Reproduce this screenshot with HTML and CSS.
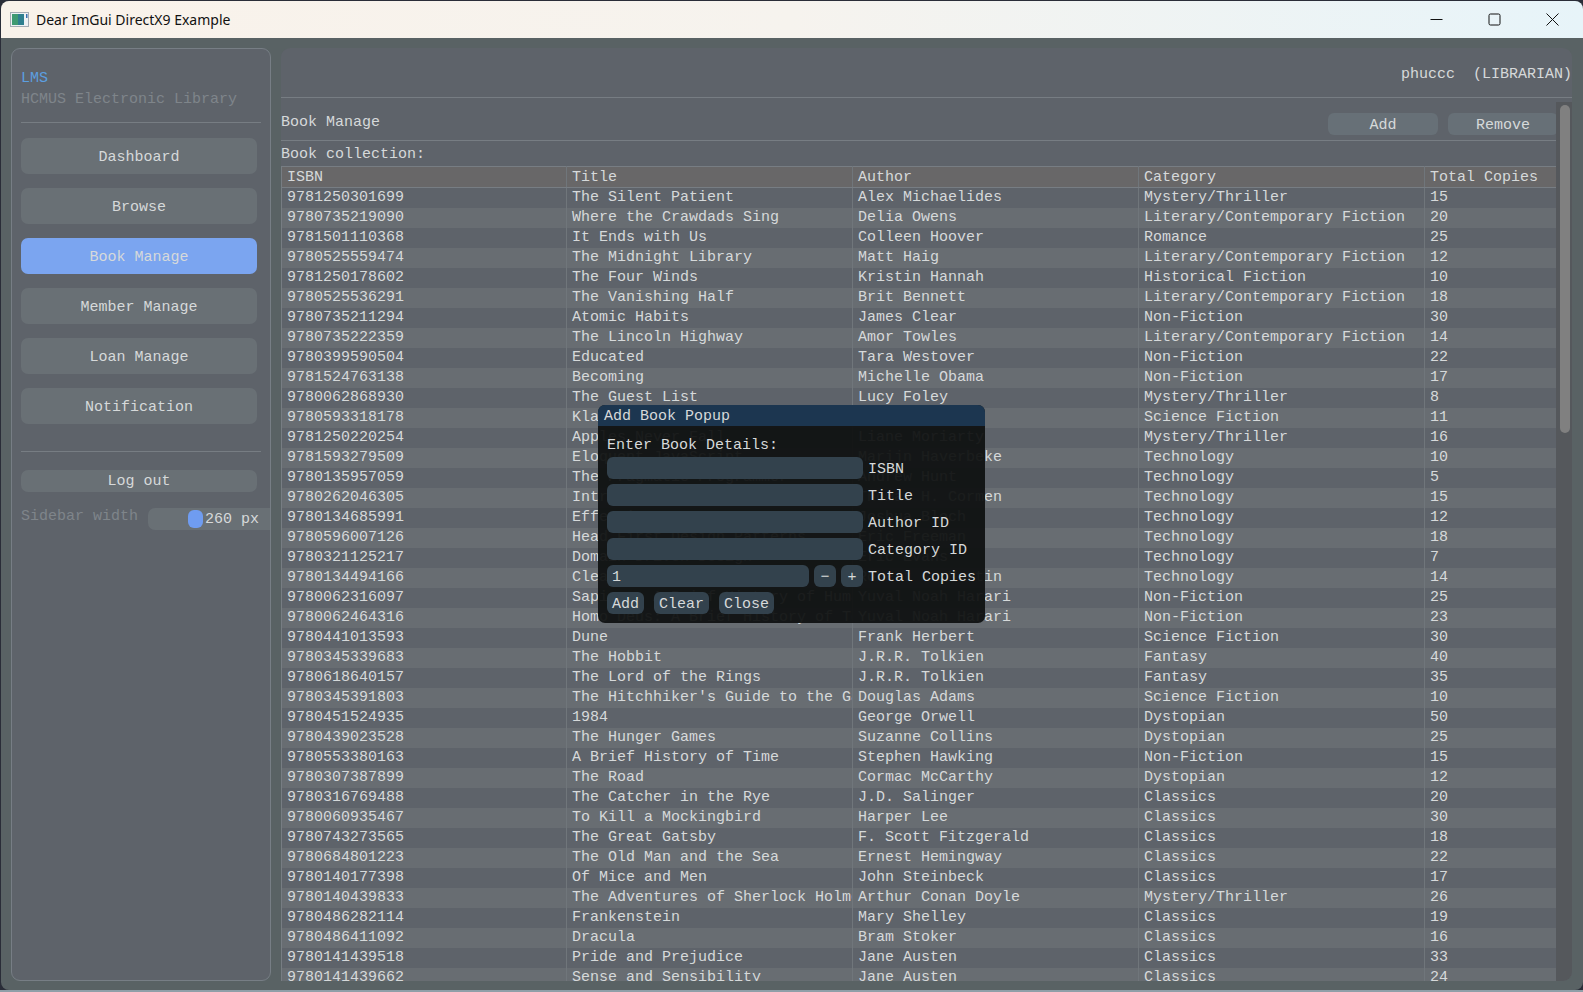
FILE: index.html
```html
<!DOCTYPE html>
<html lang="en">
<head>
    <meta charset="UTF-8">
    <title>Dear ImGui DirectX9 Example</title>
    <link rel="stylesheet" href="styles.css">
</head>
<body>
    <div class="window">
        <div class="titlebar">
            <svg class="app-icon" width="20" height="16" viewBox="0 0 20 16">
                <rect x="0.5" y="0.5" width="18" height="14" fill="#eef1f4" stroke="#a4abb3"/>
                <rect x="2" y="2" width="12" height="11" fill="#2f7f8f"/>
                <rect x="2" y="2" width="6" height="11" fill="#3f9a72"/>
                <rect x="16" y="2" width="1.5" height="4" fill="#3a6fb0"/>
            </svg>
            <span class="window-title">Dear ImGui DirectX9 Example</span>
            <div class="window-controls">
                <svg width="13" height="13" viewBox="0 0 13 13"><path d="M0.5 6.5H12.5" stroke="#111" fill="none"/></svg>
                <svg width="13" height="13" viewBox="0 0 13 13"><rect x="1" y="1" width="11" height="11" rx="1.5" stroke="#111" fill="none"/></svg>
                <svg width="13" height="13" viewBox="0 0 13 13"><path d="M0.5 0.5L12.5 12.5M12.5 0.5L0.5 12.5" stroke="#111" fill="none"/></svg>
            </div>
        </div>

        <div class="app">
            <aside class="sidebar">
                <div class="brand">LMS</div>
                <div class="brand-sub">HCMUS Electronic Library</div>
                <hr class="side-line">
                <nav class="nav">
                    <button class="nav-btn">Dashboard</button>
                    <button class="nav-btn">Browse</button>
                    <button class="nav-btn active">Book Manage</button>
                    <button class="nav-btn">Member Manage</button>
                    <button class="nav-btn">Loan Manage</button>
                    <button class="nav-btn">Notification</button>
                </nav>
                <hr class="side-line lower">
                <button class="logout">Log out</button>
                <div class="width-row">
                    <span class="width-label">Sidebar width</span>
                    <div class="slider"><span class="grab"></span><span class="slider-value">260 px</span></div>
                </div>
            </aside>

            <main class="main">
                <header class="user-bar">phuccc&nbsp;&nbsp;(LIBRARIAN)</header>
                <div class="scroll-area">
                    <div class="content">
                        <div class="page-head">
                            <span>Book Manage</span>
                            <div class="page-actions">
                                <button class="head-btn add">Add</button>
                                <button class="head-btn remove">Remove</button>
                            </div>
                        </div>
                        <div class="table-label">Book collection:</div>
                        <table class="books">
                            <colgroup>
                                <col class="col-a"><col class="col-b"><col class="col-b"><col class="col-b"><col class="col-c">
                            </colgroup>
                            <thead>
                                <tr><th>ISBN</th><th>Title</th><th>Author</th><th>Category</th><th>Total Copies</th></tr>
                            </thead>
                            <tbody>
                                <tr><td>9781250301699</td><td>The Silent Patient</td><td>Alex Michaelides</td><td>Mystery/Thriller</td><td>15</td></tr>
                                <tr><td>9780735219090</td><td>Where the Crawdads Sing</td><td>Delia Owens</td><td>Literary/Contemporary Fiction</td><td>20</td></tr>
                                <tr><td>9781501110368</td><td>It Ends with Us</td><td>Colleen Hoover</td><td>Romance</td><td>25</td></tr>
                                <tr><td>9780525559474</td><td>The Midnight Library</td><td>Matt Haig</td><td>Literary/Contemporary Fiction</td><td>12</td></tr>
                                <tr><td>9781250178602</td><td>The Four Winds</td><td>Kristin Hannah</td><td>Historical Fiction</td><td>10</td></tr>
                                <tr><td>9780525536291</td><td>The Vanishing Half</td><td>Brit Bennett</td><td>Literary/Contemporary Fiction</td><td>18</td></tr>
                                <tr><td>9780735211294</td><td>Atomic Habits</td><td>James Clear</td><td>Non-Fiction</td><td>30</td></tr>
                                <tr><td>9780735222359</td><td>The Lincoln Highway</td><td>Amor Towles</td><td>Literary/Contemporary Fiction</td><td>14</td></tr>
                                <tr><td>9780399590504</td><td>Educated</td><td>Tara Westover</td><td>Non-Fiction</td><td>22</td></tr>
                                <tr><td>9781524763138</td><td>Becoming</td><td>Michelle Obama</td><td>Non-Fiction</td><td>17</td></tr>
                                <tr><td>9780062868930</td><td>The Guest List</td><td>Lucy Foley</td><td>Mystery/Thriller</td><td>8</td></tr>
                                <tr><td>9780593318178</td><td>Klara and the Sun</td><td>Kazuo Ishiguro</td><td>Science Fiction</td><td>11</td></tr>
                                <tr><td>9781250220254</td><td>Apples Never Fall</td><td>Liane Moriarty</td><td>Mystery/Thriller</td><td>16</td></tr>
                                <tr><td>9781593279509</td><td>Eloquent JavaScript</td><td>Marijn Haverbeke</td><td>Technology</td><td>10</td></tr>
                                <tr><td>9780135957059</td><td>The Pragmatic Programmer</td><td>Andrew Hunt</td><td>Technology</td><td>5</td></tr>
                                <tr><td>9780262046305</td><td>Introduction to Algorithms</td><td>Thomas H. Cormen</td><td>Technology</td><td>15</td></tr>
                                <tr><td>9780134685991</td><td>Effective Java</td><td>Joshua Bloch</td><td>Technology</td><td>12</td></tr>
                                <tr><td>9780596007126</td><td>Head First Design Patterns</td><td>Eric Freeman</td><td>Technology</td><td>18</td></tr>
                                <tr><td>9780321125217</td><td>Domain-Driven Design</td><td>Eric Evans</td><td>Technology</td><td>7</td></tr>
                                <tr><td>9780134494166</td><td>Clean Architecture</td><td>Robert C. Martin</td><td>Technology</td><td>14</td></tr>
                                <tr><td>9780062316097</td><td>Sapiens: A Brief History of Humankind</td><td>Yuval Noah Harari</td><td>Non-Fiction</td><td>25</td></tr>
                                <tr><td>9780062464316</td><td>Homo Deus: A Brief History of Tomorrow</td><td>Yuval Noah Harari</td><td>Non-Fiction</td><td>23</td></tr>
                                <tr><td>9780441013593</td><td>Dune</td><td>Frank Herbert</td><td>Science Fiction</td><td>30</td></tr>
                                <tr><td>9780345339683</td><td>The Hobbit</td><td>J.R.R. Tolkien</td><td>Fantasy</td><td>40</td></tr>
                                <tr><td>9780618640157</td><td>The Lord of the Rings</td><td>J.R.R. Tolkien</td><td>Fantasy</td><td>35</td></tr>
                                <tr><td>9780345391803</td><td>The Hitchhiker's Guide to the Galaxy</td><td>Douglas Adams</td><td>Science Fiction</td><td>10</td></tr>
                                <tr><td>9780451524935</td><td>1984</td><td>George Orwell</td><td>Dystopian</td><td>50</td></tr>
                                <tr><td>9780439023528</td><td>The Hunger Games</td><td>Suzanne Collins</td><td>Dystopian</td><td>25</td></tr>
                                <tr><td>9780553380163</td><td>A Brief History of Time</td><td>Stephen Hawking</td><td>Non-Fiction</td><td>15</td></tr>
                                <tr><td>9780307387899</td><td>The Road</td><td>Cormac McCarthy</td><td>Dystopian</td><td>12</td></tr>
                                <tr><td>9780316769488</td><td>The Catcher in the Rye</td><td>J.D. Salinger</td><td>Classics</td><td>20</td></tr>
                                <tr><td>9780060935467</td><td>To Kill a Mockingbird</td><td>Harper Lee</td><td>Classics</td><td>30</td></tr>
                                <tr><td>9780743273565</td><td>The Great Gatsby</td><td>F. Scott Fitzgerald</td><td>Classics</td><td>18</td></tr>
                                <tr><td>9780684801223</td><td>The Old Man and the Sea</td><td>Ernest Hemingway</td><td>Classics</td><td>22</td></tr>
                                <tr><td>9780140177398</td><td>Of Mice and Men</td><td>John Steinbeck</td><td>Classics</td><td>17</td></tr>
                                <tr><td>9780140439833</td><td>The Adventures of Sherlock Holmes</td><td>Arthur Conan Doyle</td><td>Mystery/Thriller</td><td>26</td></tr>
                                <tr><td>9780486282114</td><td>Frankenstein</td><td>Mary Shelley</td><td>Classics</td><td>19</td></tr>
                                <tr><td>9780486411092</td><td>Dracula</td><td>Bram Stoker</td><td>Classics</td><td>16</td></tr>
                                <tr><td>9780141439518</td><td>Pride and Prejudice</td><td>Jane Austen</td><td>Classics</td><td>33</td></tr>
                                <tr><td>9780141439662</td><td>Sense and Sensibility</td><td>Jane Austen</td><td>Classics</td><td>24</td></tr>
                            </tbody>
                        </table>
                    </div>
                    <div class="scrollbar"><div class="thumb"></div></div>
                </div>
            </main>
        </div>
    </div>

    <!-- Add book popup, sits over the table -->
    <div class="popup">
        <div class="popup-title">Add Book Popup</div>
        <div class="popup-body">
            <div class="popup-heading">Enter Book Details:</div>
            <div class="field"><div class="input"></div><span>ISBN</span></div>
            <div class="field"><div class="input"></div><span>Title</span></div>
            <div class="field"><div class="input"></div><span>Author ID</span></div>
            <div class="field"><div class="input"></div><span>Category ID</span></div>
            <div class="field">
                <div class="input short">1</div>
                <button class="step">&minus;</button>
                <button class="step">+</button>
                <span>Total Copies</span>
            </div>
            <div class="popup-actions">
                <button class="pop-btn">Add</button>
                <button class="pop-btn">Clear</button>
                <button class="pop-btn">Close</button>
            </div>
        </div>
    </div>
</body>
</html>
```

FILE: styles.css
```css
* {
    box-sizing: border-box;
}

html, body {
    height: 100%;
}

body {
    margin: 0;
    position: relative;
    overflow: hidden;
    padding: 1px 0 2px 1px;
    background: linear-gradient(#2a2d38 990px, #8f9fa8 990px);
    font-family: "Liberation Mono", monospace;
    font-size: 15px;
    line-height: 20px;
    color: #d6d9da;
}

button {
    font: inherit;
    color: inherit;
    border: none;
    padding: 0;
    display: block;
}

.window {
    height: 100%;
    display: flex;
    flex-direction: column;
    border-radius: 8px;
    overflow: hidden;
    background: #596264;
}

.titlebar {
    height: 37px;
    flex: none;
    display: flex;
    align-items: center;
    padding-left: 9px;
    background: linear-gradient(90deg, #f9f2ea 0%, #f6f3ee 50%, #e7f4f9 100%);
}

.app-icon {
    margin-right: 6px;
}

.window-title {
    font-family: "Noto Sans", sans-serif;
    font-size: 14px;
    line-height: 18px;
    color: #111;
}

.window-controls {
    margin-left: auto;
    display: flex;
    gap: 45px;
    padding-right: 24px;
}

.app {
    flex: 1;
    min-height: 0;
    display: flex;
    gap: 10px;
    padding: 10px 11px 9px 10px;
}

/* sidebar */
.sidebar {
    width: 260px;
    flex: none;
    padding: 20px 9px 0;
    background: #5e636a;
    border: 1px solid #777e85;
    border-radius: 9px;
    overflow: hidden;
}

.brand {
    color: #5c9fe0;
}

.brand-sub {
    margin-top: 1px;
    color: #7f858a;
    white-space: nowrap;
}

.side-line {
    margin: 12px 0 15px;
    width: 240px;
    border: none;
    border-top: 1px solid #777d83;
}

.side-line.lower {
    margin: 27px 0 18px;
}

.nav {
    display: flex;
    flex-direction: column;
    gap: 14px;
    width: 236px;
}

.nav-btn {
    height: 36px;
    padding-top: 4px;
    background: #697075;
    border-radius: 7px;
}

.nav-btn.active {
    background: #7ba5f0;
}

.logout {
    width: 236px;
    height: 22px;
    padding-top: 2px;
    background: #697075;
    border-radius: 7px;
}

.width-row {
    display: flex;
    align-items: center;
    margin-top: 16px;
    white-space: nowrap;
}

.width-label {
    width: 127px;
    flex: none;
    color: #7f858a;
    position: relative;
    top: -2px;
}

.slider {
    width: 125px;
    flex: none;
    height: 22px;
    display: flex;
    align-items: center;
    gap: 2px;
    padding-left: 40px;
    background: #697075;
    border-radius: 7px 0 0 7px;
}

.slider-value {
    padding-top: 2px;
}

.grab {
    width: 15px;
    height: 18px;
    border-radius: 6px;
    background: #6f9cf0;
}

/* main area */
.main {
    flex: 1;
    min-width: 0;
    display: flex;
    flex-direction: column;
    background: #5e636a;
    border-radius: 9px 9px 9px 0;
    overflow: hidden;
}

.user-bar {
    height: 50px;
    flex: none;
    padding: 17px 0 0;
    text-align: right;
    white-space: nowrap;
    border-bottom: 1px solid #777d83;
}

.scroll-area {
    flex: 1;
    min-height: 0;
    display: flex;
}

.content {
    width: 1275px;
    flex: none;
    overflow: hidden;
}

.page-head {
    height: 43px;
    display: flex;
    justify-content: space-between;
    align-items: flex-end;
    padding-bottom: 7px;
    border-bottom: 1px solid #777d83;
}

.page-actions {
    display: flex;
    gap: 10px;
    margin-bottom: -2px;
}

.head-btn {
    height: 22px;
    padding-top: 3px;
    background: #677077;
    border-radius: 6px;
}

.head-btn.add {
    width: 110px;
}

.head-btn.remove {
    width: 110px;
    margin-right: -2px;
}

.table-label {
    height: 25px;
    padding-top: 4px;
}

.books {
    width: 1275px;
    table-layout: fixed;
    border-collapse: collapse;
    border: 1px solid #777d83;
}

.col-a { width: 285px; }
.col-b { width: 286px; }
.col-c { width: 132px; }

.books th,
.books td {
    height: 20px;
    padding: 0 0 0 5px;
    font-weight: normal;
    text-align: left;
    white-space: nowrap;
    overflow: hidden;
    border-right: 1px solid #70767b;
}

.books th {
    padding-top: 2px;
    line-height: 18px;
    background: #686768;
    border-bottom: 1px solid #777d83;
}

.books tbody tr:nth-child(even) {
    background: #686d72;
}

.scrollbar {
    width: 16px;
    flex: none;
    margin-top: 4px;
    padding: 3px 2px 0 4px;
    background: #55585c;
}

.thumb {
    height: 328px;
    border-radius: 5px;
    background: #808080;
}

/* popup */
.popup {
    position: absolute;
    left: 598px;
    top: 405px;
    width: 387px;
    height: 218px;
    border-radius: 7px;
    overflow: hidden;
    display: flex;
    flex-direction: column;
    background: rgba(15, 17, 17, 0.94);
}

.popup-title {
    height: 21px;
    flex: none;
    padding-left: 6px;
    line-height: 24px;
    background: #1c3650;
}

.popup-body {
    padding: 8px 9px;
    display: flex;
    flex-direction: column;
    gap: 5px;
}

.popup-heading {
    height: 18px;
    line-height: 24px;
    margin-bottom: -5px;
}

.field {
    display: flex;
    align-items: center;
    gap: 5px;
    height: 22px;
    white-space: nowrap;
}

.field span {
    line-height: 18px;
    padding-top: 4px;
}

.field:nth-child(2) {
    margin-top: 5px;
}

.input {
    width: 256px;
    height: 22px;
    flex: none;
    padding-left: 5px;
    line-height: 26px;
    background: #33424d;
    border-radius: 6px;
}

.input.short {
    width: 202px;
}

.step {
    width: 22px;
    height: 22px;
    flex: none;
    padding-top: 3px;
    background: #33424d;
    border-radius: 6px;
}

.popup-actions {
    display: flex;
    gap: 10px;
}

.pop-btn {
    height: 22px;
    padding: 3px 5px 0;
    background: #33424d;
    border-radius: 6px;
}
```
